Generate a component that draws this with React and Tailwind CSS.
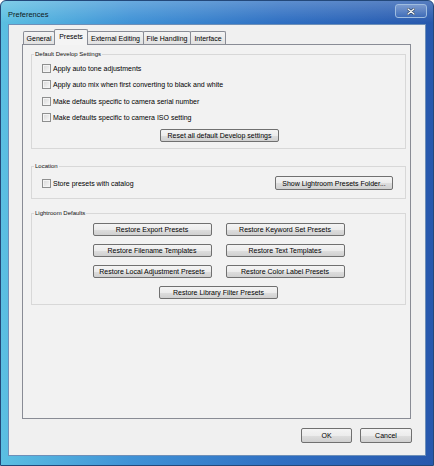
import React from "react";

const tabs = [
  { label: "General", w: "w-[32px]" },
  { label: "Presets", w: "w-[34px]", active: true },
  { label: "External Editing", w: "w-[57px]" },
  { label: "File Handling", w: "w-[48px]" },
  { label: "Interface", w: "w-[36px]" },
];

const developOptions = [
  "Apply auto tone adjustments",
  "Apply auto mix when first converting to black and white",
  "Make defaults specific to camera serial number",
  "Make defaults specific to camera ISO setting",
];

const restoreButtons = [
  "Restore Export Presets",
  "Restore Keyword Set Presets",
  "Restore Filename Templates",
  "Restore Text Templates",
  "Restore Local Adjustment Presets",
  "Restore Color Label Presets",
];

const btn =
  "flex items-center justify-center border border-[#707070] rounded-[2px] bg-[linear-gradient(to_bottom,#f4f4f4_0%,#ececec_50%,#dedede_51%,#d0d0d0_100%)] text-[7px] leading-none text-black";

const Checkbox = ({ label }) => (
  <div className="flex items-center">
    <span className="w-[9px] h-[9px] border border-[#8e8f8f] bg-[linear-gradient(135deg,#d8d8d8,#f8f8f8)] shadow-[inset_0_0_0_1px_#f4f4f4]" />
    <span className="ml-[2px] text-[7px] leading-none">{label}</span>
  </div>
);

const Group = ({ title, className, children }) => (
  <fieldset
    className={`mx-[4px] ml-[8px] border border-[#d8d8d8] pl-[2px] ${className}`}
  >
    <legend className="px-[1px] text-[6px] leading-[8px] text-[#111]">{title}</legend>
    {children}
  </fieldset>
);

export default function App() {
  return (
    <div className="w-[434px] h-[466px] flex flex-col rounded-t-[6px] border border-[#23487a] bg-[linear-gradient(to_bottom,rgba(255,255,255,0.22),rgba(255,255,255,0)_22px),linear-gradient(to_right,#5bbfe2,#3f92d6_30%,#2f6fc2_65%,#2758ad)] font-['Liberation_Sans',Arial,sans-serif] text-black overflow-hidden">
      {/* Title bar */}
      <div className="h-[23px] flex items-start justify-between pl-[7px] pr-[6px]">
        <span className="pt-[9px] text-[7.5px] leading-[10px] text-[#101820]">Preferences</span>
        <div className="mt-[3px] w-[32px] h-[14px] rounded-[3px] border border-[#9fbde0] bg-[linear-gradient(to_bottom,rgba(255,255,255,0.25),rgba(255,255,255,0.05))] flex items-center justify-center">
          <svg width="8" height="7" viewBox="0 0 8 7">
            <path d="M1 1 L7 6 M7 1 L1 6" stroke="#2a3f5c" strokeWidth="2.6" strokeLinecap="round" />
            <path d="M1 1 L7 6 M7 1 L1 6" stroke="#f4f6f8" strokeWidth="1.4" strokeLinecap="round" />
          </svg>
        </div>
      </div>

      {/* Client area */}
      <div className="mx-[7px] h-[432px] border border-[#6d8fb8] bg-[#f0f0f0] flex flex-col">
        {/* Tabs */}
        <div className="flex items-end pt-[4px] pl-[14px] h-[19px]">
          {tabs.map((t, i) =>
            t.active ? (
              <div
                key={i}
                className={`${t.w} h-[16px] -mb-[1px] -ml-[1px] relative z-10 flex items-start justify-center pt-[3px] border border-b-0 border-[#898c95] bg-[#f4f4f4] rounded-t-[2px] text-[7px] leading-[8px]`}
              >
                {t.label}
              </div>
            ) : (
              <div
                key={i}
                className={`${t.w} h-[13px] ${i > 0 ? "-ml-[1px]" : ""} flex items-center justify-center border border-b-0 border-[#898c95] bg-[linear-gradient(to_bottom,#f4f4f4,#e1e1e1)] rounded-t-[2px] text-[7px] leading-none`}
              >
                {t.label}
              </div>
            )
          )}
        </div>

        {/* Panel */}
        <div className="ml-[13px] mr-[14px] h-[375px] border border-[#898c95] bg-[#f2f2f2] flex flex-col">
          {/* Default Develop Settings */}
          <Group title="Default Develop Settings" className="mt-[5px]">
            <div className="flex flex-col pl-[8px] pt-[2px] pb-[6px]">
              {developOptions.map((o, i) => (
                <div key={i} className="h-[16.5px] flex items-center">
                  <Checkbox label={o} />
                </div>
              ))}
              <button className={`${btn} self-center mt-[3px] w-[119px] h-[13px] ml-[-8px]`}>
                Reset all default Develop settings
              </button>
            </div>
          </Group>

          {/* Location */}
          <Group title="Location" className="mt-[13px]">
            <div className="flex items-center justify-between pl-[8px] pr-[12px] pt-[6px] pb-[8px]">
              <Checkbox label="Store presets with catalog" />
              <button className={`${btn} w-[118px] h-[14px]`}>Show Lightroom Presets Folder...</button>
            </div>
          </Group>

          {/* Lightroom Defaults */}
          <Group title="Lightroom Defaults" className="mt-[10px]">
            <div className="flex justify-center pt-[6px] pb-[5px] pr-[2px]">
              <div className="grid grid-cols-[119px_119px] gap-x-[14px] gap-y-[8px]">
                {restoreButtons.map((b, i) => (
                  <button key={i} className={`${btn} h-[13px]`}>
                    {b}
                  </button>
                ))}
                <button className={`${btn} h-[13px] col-span-2 justify-self-center w-[119px]`}>
                  Restore Library Filter Presets
                </button>
              </div>
            </div>
          </Group>
        </div>

        {/* Dialog buttons */}
        <div className="flex justify-end gap-[8px] mt-[9px] pr-[13px]">
          <button className={`${btn} w-[51px] h-[15px]`}>OK</button>
          <button className={`${btn} w-[52px] h-[15px]`}>Cancel</button>
        </div>
      </div>
    </div>
  );
}
